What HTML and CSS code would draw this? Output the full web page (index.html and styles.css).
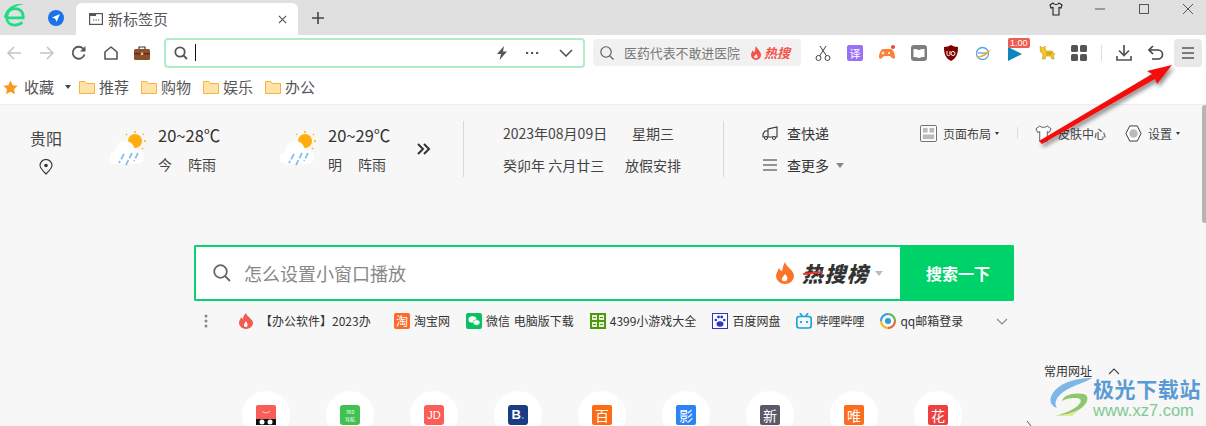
FILE: index.html
```html
<!DOCTYPE html>
<html lang="zh-CN">
<head>
<meta charset="utf-8">
<title>新标签页</title>
<link rel="stylesheet" href="styles.css">
</head>
<body>
<div class="tabbar">
  <svg class="logo" viewBox="0 0 24 26"><path d="M5 16h17c.5-6-3-10-9-10-5.500 0-9 4-9 10 0 5 4 8 9 8 3 0 6-1 8-3" fill="none" stroke="#1fdc85" stroke-width="3"/><path d="M1 16C2 7 12-2 24 2 15 1 7 7 4 16z" fill="#1fdc85"/></svg>
  <svg class="compass" viewBox="0 0 16 16"><circle cx="8" cy="8" r="8" fill="#1a73e8"/><path d="M12 4 4 7.500l3.300 1.200L8.500 12z" fill="#fff"/></svg>
  <div class="tab">
    <svg class="tabicon" viewBox="0 0 14 12"><rect x=".6" y=".6" width="12.800" height="10.800" fill="none" stroke="#555" stroke-width="1.200"/><rect x="1" y="1" width="6" height="2" fill="#555"/><path d="M4 7h1.400M6.500 7h1.400M9 7h1.400" stroke="#555" stroke-width="1.200"/></svg>
    <span class="tabtitle">新标签页</span>
    <svg class="tabclose" viewBox="0 0 10 10"><path d="M1 1l8 8M9 1l-8 8" stroke="#555" stroke-width="1.300"/></svg>
  </div>
  <svg class="plus" viewBox="0 0 12 12"><path d="M6 0v12M0 6h12" stroke="#444" stroke-width="1.600"/></svg>
  <div class="winbtns">
    <svg class="wb" viewBox="0 0 14 14"><path d="M4 1 1 3l1 3 2-.5V13h6V5.500L12 6l1-3-3-2c-1 2-5 2-6 0z" fill="none" stroke="#222" stroke-width="1.100"/></svg>
    <svg class="wb" viewBox="0 0 14 14"><path d="M2 7h10" stroke="#555"/></svg>
    <svg class="wb" viewBox="0 0 14 14"><rect x="2.500" y="2.500" width="9" height="9" fill="none" stroke="#555"/></svg>
    <svg class="wb" viewBox="0 0 14 14"><path d="M2 2l10 10M12 2 2 12" stroke="#555"/></svg>
  </div>
</div>

<div class="toolbar">
  <svg class="tool navfirst" viewBox="0 0 16 16"><path d="M15 8H2M8 2 2 8l6 6" fill="none" stroke="#c4c4c4" stroke-width="1.500"/></svg>
  <svg class="tool" viewBox="0 0 16 16"><path d="M1 8h13M8 2l6 6-6 6" fill="none" stroke="#c4c4c4" stroke-width="1.500"/></svg>
  <svg class="tool" viewBox="0 0 16 16"><path d="M13.500 9.500A6 6 0 1 1 12 3.500" fill="none" stroke="#555" stroke-width="1.800"/><path d="M14.500 1v5.500H9z" fill="#555"/></svg>
  <svg class="tool" viewBox="0 0 16 16"><path d="M2 14V7l6-5 6 5v7z" fill="none" stroke="#555" stroke-width="1.600" stroke-linejoin="round"/></svg>
  <svg class="tool bag" viewBox="0 0 16 16"><rect x="0" y="4" width="16" height="11" rx="1.500" fill="#8a4f2c"/><rect x="0" y="8" width="16" height="1.500" fill="#5e3218"/><path d="M5 4V2h6v2" fill="none" stroke="#5e3218" stroke-width="1.200"/><rect x="6.800" y="7.500" width="2.400" height="2.500" fill="#e4c08a"/></svg>

  <div class="address">
    <svg class="addr-search" viewBox="0 0 14 14"><circle cx="6" cy="6" r="4.700" fill="none" stroke="#555" stroke-width="1.800"/><path d="M9.500 9.500 13 13" stroke="#555" stroke-width="1.800"/></svg>
    <span class="caret"></span>
    <svg class="bolt" viewBox="0 0 12 14"><path d="M8 0 1 8h4l-1.500 6L11 5.500H7z" fill="#555"/></svg>
    <svg class="adots" viewBox="0 0 14 4"><path d="M1 2h2.200M6 2h2.200M11 2h2.200" stroke="#555" stroke-width="2"/></svg>
    <svg class="achev" viewBox="0 0 14 8"><path d="M1 1l6 6 6-6" fill="none" stroke="#555" stroke-width="1.600"/></svg>
  </div>

  <div class="hot">
    <svg class="hot-search" viewBox="0 0 14 14"><circle cx="6" cy="6" r="5.200" fill="none" stroke="#555" stroke-width="1.100"/><path d="M9.800 9.800 13.500 13.500" stroke="#555" stroke-width="1.100"/></svg>
    <span class="hot-text">医药代表不敢进医院</span>
    <svg class="flame-s" viewBox="0 0 12 14"><path d="M6 0c1 3 5 5 5 9a5 5 0 0 1-10 0c0-2 1-3 2-5 0 2 1 2 1.500 2C5.500 4 5 2 6 0z" fill="#f6514b"/><path d="M6 8c1 1 2 2 1.500 3.500A2 2 0 0 1 4 11C4 10 5.500 9.500 6 8z" fill="#f1f1f1"/></svg>
    <span class="hot-label">热搜</span>
  </div>

  <div class="exts">
    <svg class="ext" viewBox="0 0 16 16"><circle cx="3.500" cy="13" r="2.500" fill="none" stroke="#444"/><circle cx="12.500" cy="13" r="2.500" fill="none" stroke="#444"/><path d="M4.500 11 11 1M11.500 11 5 1" stroke="#444"/></svg>
    <span class="ext trans">译</span>
    <svg class="ext" viewBox="0 0 16 16"><path d="M4 4h8c2 0 4 5 4 8 0 2-2 2-3 1l-2-2H5l-2 2c-1 1-3 1-3-1 0-3 2-8 4-8z" fill="#fb8137"/><path d="M4 6.500v3M2.500 8h3" stroke="#fff"/><circle cx="10" cy="8" r="1" fill="#fff"/><circle cx="14" cy="2" r="2" fill="#f0413c"/></svg>
    <svg class="ext" viewBox="0 0 16 16"><rect width="16" height="16" rx="3" fill="#7e7e7e"/><path d="M2.500 4c2 0 4 0 5.500 1.300C9.500 4 11.500 4 13.500 4v8c-2 0-4 0-5.500 1.300C6.500 12 4.500 12 2.500 12z" fill="#fff"/></svg>
    <svg class="ext" viewBox="0 0 16 16"><path d="M8 0c2 1 4 2 7 2 0 6-1 11-7 14C2 13 1 8 1 2c3 0 5-1 7-2z" fill="#800000"/><path d="M4 6v3.500c0 1.500 3 1.500 3 0V6" fill="none" stroke="#fff"/><circle cx="10" cy="8.500" r="2" fill="none" stroke="#fff"/></svg>
    <svg class="ext" viewBox="0 0 16 16"><circle cx="7.500" cy="8.500" r="6" fill="none" stroke="#5ba3dd" stroke-width="1.300"/><path d="M3 8h9" stroke="#5ba3dd" stroke-width="1.300"/><path d="M0 12C5 12 12 8 16 4 14 9 7 14 0 12z" fill="#eda923"/></svg>
    <span class="ext badge-wrap">
      <svg class="fill" viewBox="0 0 16 16"><path d="M1 2l14 7-14 7z" fill="#0d86bb"/></svg>
      <span class="badge">1.00</span>
    </span>
    <svg class="ext" viewBox="0 0 16 16"><path d="M1 1l1.500 1.500h2L6 1l.5 5H13l2 2.500 1 .5-1.500 1L15 14h-2l-1.500-3H7l-1 3H3.500L4 9 1.500 7z" fill="#f2c81e" stroke="#b8860b" stroke-width=".500"/><path d="M8 7v3M10 7v3M12 7v3" stroke="#c98a10"/></svg>
    <svg class="ext" viewBox="0 0 16 16"><rect x="0" y="0" width="7" height="7" rx="1.500" fill="#555"/><rect x="9" y="0" width="7" height="7" rx="1.500" fill="#555"/><rect x="0" y="9" width="7" height="7" rx="1.500" fill="#555"/><rect x="9" y="9" width="7" height="7" rx="1.500" fill="#555"/></svg>
    <span class="sep"></span>
    <svg class="ext" viewBox="0 0 16 16"><path d="M8 0v10M3 5.500l5 5 5-5M1 11v4h14v-4" fill="none" stroke="#555" stroke-width="1.700"/></svg>
    <svg class="ext" viewBox="0 0 16 16"><path d="M1 5h9a4.500 4.500 0 0 1 0 9H4" fill="none" stroke="#444" stroke-width="1.600"/><path d="M5 1 1 5l4 4" fill="none" stroke="#444" stroke-width="1.600"/></svg>
    <span class="menu"><svg class="menuicon" viewBox="0 0 12 12"><path d="M0 1h12M0 6h12M0 11h12" stroke="#555" stroke-width="1.700"/></svg></span>
  </div>
</div>

<div class="bookmarks">
  <svg class="star" viewBox="0 0 16 16"><path d="M8 .5l2.300 5 5.400.6-4 3.700 1.100 5.400L8 12.500l-4.800 2.700 1.100-5.400-4-3.700 5.400-.6z" fill="#f99a1c"/></svg>
  <span class="bm first">收藏</span>
  <span class="tri"></span>
  <svg class="folder" viewBox="0 0 16 13"><path d="M.5 12.500V.5h5.500l1.500 2h8v10z" fill="#ffe3a8" stroke="#f6b23f"/></svg><span class="bm">推荐</span>
  <svg class="folder" viewBox="0 0 16 13"><path d="M.5 12.500V.5h5.500l1.500 2h8v10z" fill="#ffe3a8" stroke="#f6b23f"/></svg><span class="bm">购物</span>
  <svg class="folder" viewBox="0 0 16 13"><path d="M.5 12.500V.5h5.500l1.500 2h8v10z" fill="#ffe3a8" stroke="#f6b23f"/></svg><span class="bm">娱乐</span>
  <svg class="folder" viewBox="0 0 16 13"><path d="M.5 12.500V.5h5.500l1.500 2h8v10z" fill="#ffe3a8" stroke="#f6b23f"/></svg><span class="bm">办公</span>
</div>

<main class="content">
  <div class="infobar">
    <div class="city">
      <span>贵阳</span>
      <svg class="pin" viewBox="0 0 14 16"><path d="M7 15C3 11 1 9 1 6.500a6 6 0 0 1 12 0C13 9 11 11 7 15z" fill="none" stroke="#333" stroke-width="1.100"/><circle cx="7" cy="6.500" r="1.800" fill="#333"/></svg>
    </div>
    <div class="day">
      <svg class="wicon" viewBox="0 0 36 36"><circle cx="25" cy="10" r="7" fill="#ffae0d"/><path d="M25 0v2M34 3l-1 1M36 10h-2M16 3l1 1M33 18l-1-1" stroke="#ffae0d" stroke-width="1.500"/><path d="M6 33a6 6 0 0 1-1-12c0-7 5-11 10-11 6 0 9 4 10 9h2a7 7 0 0 1 0 14z" fill="#fff"/><path d="M14 23l-5 9M22 22l-6 12M28 22l-4 8" stroke="#7dbcf5" stroke-width="1.700" stroke-dasharray="6 2"/></svg>
      <div class="wtext"><span class="temp">20~28℃</span><span class="wline"><span>今</span><span>阵雨</span></span></div>
    </div>
    <div class="day">
      <svg class="wicon" viewBox="0 0 36 36"><circle cx="25" cy="10" r="7" fill="#ffae0d"/><path d="M25 0v2M34 3l-1 1M36 10h-2M16 3l1 1M33 18l-1-1" stroke="#ffae0d" stroke-width="1.500"/><path d="M6 33a6 6 0 0 1-1-12c0-7 5-11 10-11 6 0 9 4 10 9h2a7 7 0 0 1 0 14z" fill="#fff"/><path d="M14 23l-5 9M22 22l-6 12M28 22l-4 8" stroke="#7dbcf5" stroke-width="1.700" stroke-dasharray="6 2"/></svg>
      <div class="wtext"><span class="temp">20~29℃</span><span class="wline"><span>明</span><span>阵雨</span></span></div>
    </div>
    <svg class="more" viewBox="0 0 14 12"><path d="M1 1l5 5-5 5M7 1l5 5-5 5" fill="none" stroke="#333" stroke-width="2"/></svg>
    <span class="vline first-line"></span>
    <div class="dates">
      <div class="drow"><span class="d1">2023年08月09日</span><span>星期三</span></div>
      <div class="drow"><span class="d1">癸卯年 六月廿三</span><span class="d2">放假安排</span></div>
    </div>
    <span class="vline"></span>
    <div class="tools2">
      <div class="trow"><svg class="t2icon" viewBox="0 0 16 14"><path d="M6 11V3l9-2v10zM6 5H3L1 8v3h5" fill="none" stroke="#333" stroke-width="1.100"/><circle cx="4" cy="12" r="1.500" fill="#fff" stroke="#333"/><circle cx="12" cy="12" r="1.500" fill="#fff" stroke="#333"/></svg><span>查快递</span></div>
      <div class="trow"><svg class="t2icon" viewBox="0 0 16 14"><path d="M1 2h14M1 7h14M1 12h14" stroke="#333" stroke-width="1.200"/></svg><span>查更多</span><span class="tri2"></span></div>
    </div>
    <div class="settings">
      <svg class="s-ic" viewBox="0 0 18 18"><rect x=".5" y=".5" width="17" height="17" rx="1.500" fill="#fff" stroke="#666"/><rect x="3" y="3" width="5" height="5" fill="#bbb"/><rect x="10" y="3" width="5" height="5" fill="#bbb"/><rect x="3" y="10" width="12" height="5" fill="#bbb"/></svg>
      <span class="s-t">页面布局</span><span class="tri3"></span>
      <span class="s-sep"></span>
      <svg class="s-ic" viewBox="0 0 18 18"><path d="M5 1 1 4l2 4 2-1v10h8V7l2 1 2-4-4-3c-1 2-7 2-8 0z" fill="#fff" stroke="#555"/></svg>
      <span class="s-t">皮肤中心</span>
      <svg class="s-ic gear" viewBox="0 0 18 18"><path d="M5 1h8l4 8-4 8H5L1 9z" fill="#fff" stroke="#333"/><circle cx="9" cy="9" r="4.500" fill="#bbb"/></svg>
      <span class="s-t">设置</span><span class="tri3"></span>
    </div>
  </div>

  <div class="search">
    <svg class="s-search" viewBox="0 0 18 18"><circle cx="7.500" cy="7.500" r="6.300" fill="none" stroke="#666" stroke-width="1.800"/><path d="M12 12l5 5" stroke="#666" stroke-width="1.800"/></svg>
    <span class="s-input">怎么设置小窗口播放</span>
    <svg class="flame" viewBox="0 0 18 22"><path d="M9 0c1 5 9 8 9 14a9 8 0 0 1-18 0c0-3 2-5 3-8 1 2 2 3 3 3C7 6 7 3 9 0z" fill="#fb7428"/><path d="M9 12c2 2 3 4 2 6a3 3 0 0 1-5 0c-1-2 2-4 3-6z" fill="#fff"/></svg>
    <span class="s-hot">热搜榜</span>
    <span class="tri4"></span>
    <button class="s-btn">搜索一下</button>
  </div>

  <div class="links">
    <svg class="ldots" viewBox="0 0 4 14"><circle cx="2" cy="2" r="1.500" fill="#888"/><circle cx="2" cy="7" r="1.500" fill="#888"/><circle cx="2" cy="12" r="1.500" fill="#888"/></svg>
    <a class="lk lk-hot"><svg class="li" viewBox="0 0 16 16"><path d="M8 0c1 4 7 6 7 10a7 6 0 0 1-14 0c0-3 2-4 2-6 1 1 1 2 2 2C5 4 6 2 8 0z" fill="#f15b50"/><path d="M8 8c1 2 2 3 1.500 5a2 2 0 0 1-3.500 0C5.500 11 7 10 8 8z" fill="#f7f7f7"/></svg><span class="lk-clip">【办公软件】2023办</span></a>
    <a class="lk"><span class="li sq tb">淘</span>淘宝网</a>
    <a class="lk"><svg class="li" viewBox="0 0 16 16"><rect width="16" height="16" rx="2" fill="#09c160"/><ellipse cx="6.500" cy="6.500" rx="4" ry="3.300" fill="#fff"/><ellipse cx="10.500" cy="9.500" rx="3.500" ry="2.800" fill="#fff" stroke="#09c160" stroke-width=".600"/></svg>微信 电脑版下载</a>
    <a class="lk"><svg class="li" viewBox="0 0 16 16"><rect width="16" height="16" fill="#4b9a10"/><path d="M2 2h5v5H2zM9 2h5v5H9zM2 9h5v5H2zM9 9h5v5H9z" fill="#e9f4d4"/><path d="M3 4.500h3M10 4.500h3M3 11.500h3M10 11.500h3" stroke="#4b9a10"/></svg>4399小游戏大全</a>
    <a class="lk"><svg class="li" viewBox="0 0 16 16"><rect x=".5" y=".5" width="15" height="15" fill="#fff" stroke="#2b33c9"/><ellipse cx="8" cy="11" rx="3.500" ry="2.800" fill="#2b33c9"/><circle cx="3.800" cy="7" r="1.300" fill="#2b33c9"/><circle cx="6.500" cy="4" r="1.400" fill="#2b33c9"/><circle cx="9.700" cy="4" r="1.400" fill="#2b33c9"/><circle cx="12.300" cy="7" r="1.300" fill="#2b33c9"/></svg>百度网盘</a>
    <a class="lk"><svg class="li" viewBox="0 0 16 16"><rect x=".8" y="3.500" width="14.400" height="11.500" rx="2.500" fill="none" stroke="#12a4dc" stroke-width="1.600"/><path d="M4 0l2.500 3.500M12 0 9.500 3.500" stroke="#12a4dc" stroke-width="1.600"/><path d="M5 8v2M11 8v2" stroke="#12a4dc" stroke-width="1.800"/></svg>哔哩哔哩</a>
    <a class="lk"><svg class="li" viewBox="0 0 16 16"><path d="M8 1a7 7 0 0 1 7 7" fill="none" stroke="#58b947" stroke-width="2"/><path d="M15 8a7 7 0 0 1-7 7" fill="none" stroke="#ef5b3d" stroke-width="2"/><path d="M8 15A7 7 0 0 1 1 8" fill="none" stroke="#f5b51e" stroke-width="2"/><path d="M1 8a7 7 0 0 1 7-7" fill="none" stroke="#2e9bdc" stroke-width="2"/><circle cx="8" cy="8" r="3" fill="#2e9bdc"/></svg>qq邮箱登录</a>
    <svg class="lchev" viewBox="0 0 12 7"><path d="M1 1l5 5 5-5" fill="none" stroke="#888" stroke-width="1.100"/></svg>
  </div>

  <div class="common"><span>常用网址</span><svg class="cchev" viewBox="0 0 12 7"><path d="M1 6l5-5 5 5" fill="none" stroke="#444" stroke-width="1.100"/></svg></div>

  <div class="sites">
    <div class="site"><span class="app tmall"><svg viewBox="0 0 20 20" class="smile"><path d="M6 6c2 2.500 6 2.500 8 0" fill="none" stroke="#ffd0cc"/><path d="M0 14h20v6H0z" fill="#111"/><circle cx="6" cy="17" r="2.500" fill="#fff"/><circle cx="14" cy="17" r="2.500" fill="#fff"/></svg></span></div>
    <div class="site"><span class="app green">360<br>导航</span></div>
    <div class="site"><span class="app jd">JD</span></div>
    <div class="site"><span class="app booking">B<i>.</i></span></div>
    <div class="site"><span class="app bai">百</span></div>
    <div class="site"><span class="app ying">影</span></div>
    <div class="site"><span class="app xin">新</span></div>
    <div class="site"><span class="app wei">唯</span></div>
    <div class="site"><span class="app hua">花</span></div>
  </div>
  <svg class="sites-next" viewBox="0 0 6 10"><path d="M1 0l4 5-4 5" fill="none" stroke="#555"/></svg>
</main>

<div class="scrollthumb"></div>

<svg class="annot" viewBox="0 0 1206 426">
  <defs><filter id="sh" x="-20%" y="-20%" width="140%" height="140%"><feDropShadow dx="2" dy="3" stdDeviation="2" flood-color="#000" flood-opacity=".45"/></filter></defs>
  <path d="M1039 141 1152 74l-5-3 25-6-15 19-2-5-113 65z" fill="#f40c0c" filter="url(#sh)"/>
</svg>

<div class="wm">
  <svg class="wm-logo" viewBox="0 0 44 40"><path d="M42 1C26 1 6 6 1 20c-2 6 2 10 6 11C3 26 7 17 20 11 28 7 36 5 42 1z" fill="#7cb7e8"/><path d="M12 24c1-6 12-9 22-7 6 2 4 10-4 15-6 4-15 6-24 7 9-3 20-7 24-13 2-3 0-5-5-5-6 0-10 1-13 3z" fill="#8fc86c"/><path d="M5 39c9-1 18-3 25-7l-8 7z" fill="#e6e89a"/></svg>
  <div class="wm-t"><span class="wm-a">极光下载站</span><span class="wm-b">www.xz7.com</span></div>
</div>
</body>
</html>
```
FILE: styles.css
```css
* { box-sizing: border-box; }
html, body { margin: 0; padding: 0; height: 426px; overflow: hidden; }
body { position: relative; width: 1206px; font-family: "Noto Sans CJK SC", "Noto Sans", sans-serif; color: #333; background: #f7f7f7; }
svg { display: block; flex: none; }

.tabbar { display: flex; align-items: center; height: 35px; background: #e0e0e0; position: relative; }
.logo { width: 22px; height: 24px; margin: -6px 0 0 3px; }
.compass { width: 16px; height: 16px; margin: 0 0 0 23px; }
.tab { display: flex; align-items: center; align-self: flex-end; width: 222px; height: 32px; margin-left: 12px; background: #fff; border-radius: 6px 6px 0 0; padding: 0 11px 0 13px; }
.tabicon { width: 14px; height: 12px; }
.tabtitle { margin-left: 5px; font-size: 15px; color: #555; flex: 1; line-height: 20px; }
.tabclose { width: 9px; height: 9px; }
.plus { width: 12px; height: 12px; margin-left: 14px; }
.winbtns { display: flex; gap: 30px; margin-left: auto; margin-right: 11px; align-self: flex-start; margin-top: 2px; }
.wb { width: 14px; height: 14px; }

.toolbar { display: flex; align-items: center; height: 35px; background: #fff; }
.tool { width: 16px; height: 16px; margin-right: 16px; }
.navfirst { margin-left: 6px; margin-right: 17px; }
.bag { margin-left: -1px; }
.address { display: flex; align-items: center; width: 421px; height: 30px; margin-left: -2px; border: 2px solid #b1ecc9; border-radius: 4px; padding-left: 8px; }
.addr-search { width: 14px; height: 14px; }
.caret { width: 1px; height: 17px; background: #111; margin-left: 7px; }
.bolt { width: 12px; height: 14px; margin-left: auto; }
.adots { width: 14px; height: 4px; margin-left: 17px; }
.achev { width: 14px; height: 8px; margin: 0 10px 0 20px; }
.hot { display: flex; align-items: center; width: 208px; height: 27px; margin-left: 8px; border-radius: 4px; background: #f1f1f1; padding-left: 7px; }
.hot-search { width: 14px; height: 14px; }
.hot-text { margin-left: 10px; font-size: 12.900px; color: #777; white-space: nowrap; line-height: 18px; }
.flame-s { width: 12px; height: 14px; margin-left: 10px; }
.hot-label { margin-left: 2px; font-size: 13px; font-weight: 700; font-style: italic; color: #f6514b; line-height: 18px; }

.exts { display: flex; align-items: center; margin-left: 14px; }
.ext { width: 16px; height: 16px; margin-right: 16px; display: block; flex: none; }
.trans { background: #9a70f5; color: #fff; font-size: 11px; line-height: 16px; text-align: center; border-radius: 2px; }
.badge-wrap { position: relative; }
.fill { width: 16px; height: 16px; }
.badge { position: absolute; left: 1px; top: -7px; background: #ef5a52; color: #fff; font-size: 9px; line-height: 10px; height: 10px; padding: 0 2px; border-radius: 2px; font-family: "Liberation Sans", sans-serif; }
.sep { width: 1px; height: 16px; background: #ddd; margin: 0 14px 0 -2px; flex: none; }
.menu { display: flex; align-items: center; justify-content: center; width: 28px; height: 28px; background: #e8e8e8; border-radius: 4px; margin-left: -6px; }
.menuicon { width: 12px; height: 12px; }

.bookmarks { display: flex; align-items: center; height: 35px; background: #fff; border-bottom: 1px solid #ededed; padding-left: 3px; font-size: 15px; color: #555; }
.star { width: 15px; height: 15px; }
.bm { margin-left: 4px; margin-right: 12px; line-height: 20px; }
.bm.first { margin-left: 6px; margin-right: 11px; }
.tri { border: 3.500px solid transparent; border-top: 4px solid #444; border-bottom: 0; margin-right: 8px; }
.folder { width: 16px; height: 13px; }

.content { position: relative; height: 321px; background: #f7f7f7; }
.infobar { display: flex; height: 76px; padding-top: 16px; }
.city { width: 32px; margin-left: 30px; display: flex; flex-direction: column; align-items: center; padding-top: 7px; font-size: 16px; line-height: 20px; color: #444; }
.pin { width: 14px; height: 16px; margin-top: 11px; }
.day { display: flex; margin-left: 48px; width: 122px; }
.day + .day { margin-left: 48px; }
.wicon { width: 36px; height: 36px; margin-top: 10px; }
.wtext { margin-left: 12px; display: flex; flex-direction: column; }
.temp { font-size: 16.500px; line-height: 28px; color: #333; white-space: nowrap; }
.wline { display: flex; gap: 16px; font-size: 14px; line-height: 30px; color: #444; white-space: nowrap; }
.more { width: 14px; height: 12px; margin: 22px 0 0 15px; }
.vline { width: 1px; height: 56px; background: #d9d9d9; }
.first-line { margin-left: 32px; }
.dates { width: 259px; padding-left: 39px; margin-top: -4px; font-size: 14px; color: #444; }
.drow { display: flex; height: 32px; line-height: 32px; white-space: nowrap; }
.d1 { width: 129px; }
.d2 { margin-left: -7px; }
.tools2 { margin-left: 38px; margin-top: -4px; width: 158px; font-size: 14px; color: #333; }
.trow { display: flex; align-items: center; height: 32px; }
.t2icon { width: 16px; height: 14px; margin-right: 9px; }
.tri2 { border: 4px solid transparent; border-top: 5px solid #888; border-bottom: 0; margin-left: 7px; }
.settings { display: flex; align-items: center; align-self: flex-start; height: 24px; font-size: 12px; color: #444; white-space: nowrap; }
.s-ic { width: 17px; height: 17px; }
.s-t { margin-left: 6px; }
.tri3 { border: 2.500px solid transparent; border-top: 3px solid #333; border-bottom: 0; margin-left: 4px; }
.s-sep { width: 1px; height: 12px; background: #ddd; margin: 0 17px 0 18px; }
.gear { margin-left: 19px; }

.search { display: flex; align-items: center; width: 820px; height: 56px; margin: 64px 0 0 194px; background: #fff; border: 2px solid #0ccf74; border-right: 0; border-radius: 2px; padding-left: 17px; }
.s-search { width: 18px; height: 18px; }
.s-input { margin-left: 13px; font-size: 18px; color: #888; line-height: 24px; }
.flame { width: 18px; height: 22px; margin-left: auto; }
.s-hot { position: relative; margin-left: 8px; font-size: 21px; font-weight: 900; font-style: italic; color: #333; line-height: 24px; letter-spacing: 1.300px; white-space: nowrap; }
.s-hot::before { content: ""; position: absolute; left: 1px; top: 11px; width: 20px; height: 2px; background: #e83b2e; transform: rotate(-6deg); }
.tri4 { border: 4.500px solid transparent; border-top: 5px solid #bbb; border-bottom: 0; margin: 0 17px 0 6px; }
.s-btn { width: 114px; height: 56px; margin: -2px 0; padding: 0 0 0 2px; background: #00d26a; color: #fff; border: 0; border-radius: 0 2px 2px 0; font: 700 16px "Noto Sans CJK SC", sans-serif; }

.links { position: relative; display: flex; align-items: center; height: 20px; margin: 10px 0 0 204px; font-size: 12px; word-spacing: 1px; color: #333; white-space: nowrap; }
.ldots { width: 4px; height: 14px; }
.lk { display: flex; align-items: center; margin-right: 16px; line-height: 18px; }
.lk-hot { margin-left: 30px; margin-right: 24px; }
.lk-hot .li { margin-right: 6px; }
.lk-clip { width: 110px; }
.li { width: 16px; height: 16px; margin-right: 4px; flex: none; }
.sq { display: block; border-radius: 2px; text-align: center; font-size: 12px; line-height: 16px; color: #fff; }
.tb { background: #fb6a28; }
.lchev { position: absolute; left: 792px; top: 7px; width: 12px; height: 7px; }

.common { position: absolute; left: 1044px; top: 256px; display: flex; align-items: center; font-size: 12px; line-height: 20px; color: #333; }
.cchev { width: 12px; height: 7px; margin-left: 16px; }

.sites { display: flex; gap: 36px; margin: 60px 0 0 242px; }
.site { display: flex; justify-content: center; width: 48px; height: 48px; padding-top: 14px; border-radius: 50%; background: #fff; flex: none; }
.app { display: block; width: 20px; height: 20px; border-radius: 2px; color: #fff; font-size: 14px; line-height: 20px; text-align: center; }
.tmall { background: #f95d57; }
.smile { width: 20px; height: 20px; }
.green { background: #41c150; font-size: 5px; line-height: 7px; padding-top: 3px; border-radius: 3px; }
.jd { background: #fb5d57; font: 11px/20px "Liberation Sans", sans-serif; border-radius: 3px; }
.booking { background: #1a3c80; font: 700 13px/20px "Liberation Sans", sans-serif; border-radius: 3px; }
.booking i { color: #25a3e8; font-style: normal; }
.bai { background: #fb6c14; }
.ying { background: #2b83f6; }
.xin { background: #5b5868; }
.wei { background: #fb6c1e; }
.hua { background: #ef4040; }
.sites-next { position: absolute; left: 1026px; top: 316px; width: 6px; height: 10px; }

.scrollthumb { position: absolute; left: 1202px; top: 105px; width: 4px; height: 118px; background: #b5b5b5; border-radius: 3px 0 0 3px; }
.annot { position: absolute; left: 0; top: 0; width: 1206px; height: 426px; pointer-events: none; }
.wm { position: absolute; left: 1050px; top: 377px; display: flex; pointer-events: none; }
.wm-logo { width: 44px; height: 40px; }
.wm-t { display: flex; flex-direction: column; margin-left: -1px; }
.wm-a { font-size: 21px; font-weight: 700; line-height: 23px; color: #5b9bd5; white-space: nowrap; letter-spacing: .6px; }
.wm-b { font: 16.500px/20px "Liberation Sans", sans-serif; color: #7ec98f; white-space: nowrap; }
```
